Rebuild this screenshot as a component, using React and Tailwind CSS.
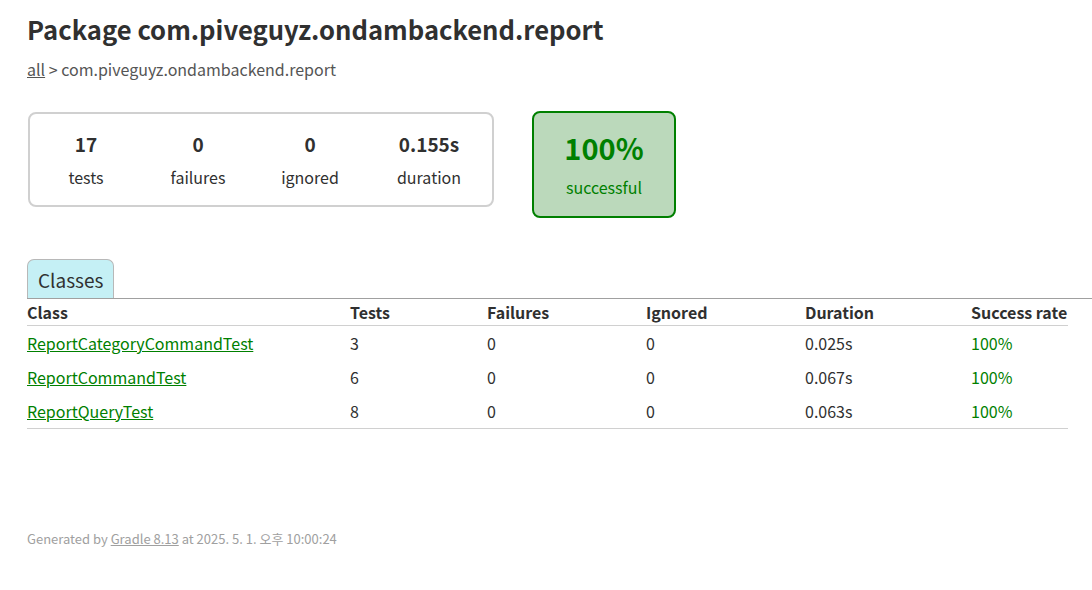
const font = { fontFamily: '"Noto Sans CJK KR", "Noto Sans", sans-serif' };

const stats = [
  { value: '17', label: 'tests', w: 'w-[112px]' },
  { value: '0', label: 'failures', w: 'w-[112px]' },
  { value: '0', label: 'ignored', w: 'w-[112px]' },
  { value: '0.155s', label: 'duration', w: 'w-[126px]' },
];

const rows = [
  { name: 'ReportCategoryCommandTest', tests: 3, failures: 0, ignored: 0, duration: '0.025s', rate: '100%' },
  { name: 'ReportCommandTest', tests: 6, failures: 0, ignored: 0, duration: '0.067s', rate: '100%' },
  { name: 'ReportQueryTest', tests: 8, failures: 0, ignored: 0, duration: '0.063s', rate: '100%' },
];

export default function App() {
  return (
    <div className="min-h-[590px] bg-white text-[#303030] pl-[27px] pt-[9px]" style={font}>
      <h1 className="text-[25.6px] font-bold leading-[40px]">Package com.piveguyz.ondambackend.report</h1>
      <div className="mt-[9px] text-[16px] leading-[22px] text-[#555555]">
        <a className="underline">all</a> &gt; com.piveguyz.ondambackend.report
      </div>

      <div className="mt-[32px] flex items-start gap-[38px]">
        <div className="ml-[1px] flex h-[95px] w-[466px] items-center rounded-[8px] border-2 border-[#d0d0d0]">
          {stats.map(s => (
            <div key={s.label} className={`${s.w} flex flex-col items-center`}>
              <div className="text-[19px] font-bold leading-[26px]">{s.value}</div>
              <div className="mt-[9px] text-[16px] leading-[22px]">{s.label}</div>
            </div>
          ))}
        </div>
        <div className="-mt-[1px] flex h-[107px] w-[144px] flex-col items-center justify-center rounded-[8px] border-2 border-[#008000] bg-[#bbd9bb] text-[#008000]">
          <div className="-mt-[2px] text-[29px] font-bold leading-[36px]">100%</div>
          <div className="mt-[11px] text-[16px] leading-[22px]">successful</div>
        </div>
      </div>

      <div className="mt-[41px] flex border-b border-[#a0a0a0]">
        <div className="h-[39px] rounded-t-[7px] border border-b-0 border-[#b8b8b8] bg-[#c5f0f5] px-[10px] text-[19px] leading-[40px]">
          Classes
        </div>
      </div>

      <table className="w-[1041px] border-collapse text-[16px]">
        <thead>
          <tr className="border-b border-[#d0d0d0]">
            <th className="w-[323px] py-[2px] text-left font-bold leading-[22px]">Class</th>
            <th className="w-[137px] text-left font-bold">Tests</th>
            <th className="w-[159px] text-left font-bold">Failures</th>
            <th className="w-[159px] text-left font-bold">Ignored</th>
            <th className="w-[166px] text-left font-bold">Duration</th>
            <th className="text-left font-bold">Success rate</th>
          </tr>
        </thead>
        <tbody className="border-b border-[#d0d0d0]">
          {rows.map(r => (
            <tr key={r.name} className="leading-[24px]">
              <td className="py-[5px]"><a className="text-[#008000] underline">{r.name}</a></td>
              <td>{r.tests}</td>
              <td>{r.failures}</td>
              <td>{r.ignored}</td>
              <td>{r.duration}</td>
              <td className="text-[#008000]">{r.rate}</td>
            </tr>
          ))}
        </tbody>
      </table>

      <div className="mt-[100px] text-[13px] text-[#a0a0a0]">
        Generated by <a className="underline">Gradle 8.13</a> at 2025. 5. 1. 오후 10:00:24
      </div>
    </div>
  );
}
